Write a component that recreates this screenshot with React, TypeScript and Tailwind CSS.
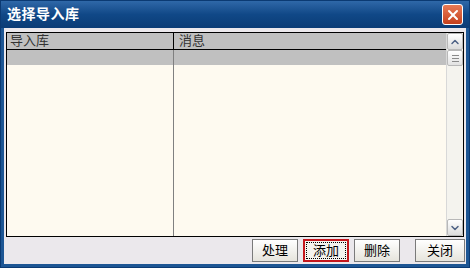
import { ChevronUp, ChevronDown, X } from 'lucide-react';

const font = { fontFamily: '"Liberation Sans", "Noto Sans CJK SC", sans-serif' };

function Btn({ label, focused, wide }: { label: string; focused?: boolean; wide?: boolean }) {
  const w = wide ? 'w-[50px]' : 'w-[46px]';
  return (
    <button
      className={
        focused
          ? `${w} h-[23px] border-2 border-[#c4161c] bg-[#f4f3ee] p-[1px]`
          : `${w} h-[23px] border border-[#7a7a7a] bg-gradient-to-b from-white to-[#e6e4dc] text-[13px] text-black`
      }
    >
      {focused ? (
        <span className="flex h-full w-full items-center justify-center border border-dotted border-black text-[13px] text-black">
          {label}
        </span>
      ) : (
        label
      )}
    </button>
  );
}

export default function App() {
  return (
    <div style={font} className="w-[470px] h-[268px] flex flex-col bg-[#0b3a73] p-[1px]">
      {/* title bar */}
      <div className="h-[27px] flex items-center justify-between pl-[6px] pr-[6px] bg-gradient-to-b from-[#2f68a8] via-[#104887] to-[#0b3c76]">
        <span className="text-white text-[14px] font-bold tracking-[0.5px]">选择导入库</span>
        <div className="w-[21px] h-[21px] rounded-[3px] border border-white bg-gradient-to-b from-[#e87a55] to-[#c5401c] flex items-center justify-center">
          <X className="w-[16px] h-[16px] text-white" strokeWidth={3} />
        </div>
      </div>
      {/* body */}
      <div className="flex-1 flex flex-col border-[3px] border-t-0 border-[#1d5694] bg-[#ebe8ec]">
        <div className="mx-[2px] mt-[4px] h-[205px] flex border border-black">
          <div className="flex-1 flex flex-col bg-[#fefaf0]">
            <div className="h-[17px] flex bg-[#c0c0c0] border-b border-black text-[13px] text-[#333]">
              <div className="w-[167px] border-r border-black pl-[3px] leading-[16px]">导入库</div>
              <div className="flex-1 pl-[5px] leading-[16px]">消息</div>
            </div>
            <div className="h-[15px] flex bg-[#c0c0c0]">
              <div className="w-[167px] border-r border-[#808080]" />
            </div>
            <div className="flex-1 flex">
              <div className="w-[167px] border-r border-[#808080]" />
            </div>
          </div>
          {/* scrollbar */}
          <div className="w-[17px] flex flex-col bg-[#f4f3ee] border-l border-[#d8d8d8]">
            <div className="h-[17px] flex items-center justify-center border border-[#b8b8b8] bg-gradient-to-b from-white to-[#dcdcdc] rounded-[2px]">
              <ChevronUp className="w-[12px] h-[12px] text-[#4d6185]" strokeWidth={3} />
            </div>
            <div className="h-[16px] flex flex-col items-center justify-center gap-[2px] border border-[#b8b8b8] bg-gradient-to-b from-white to-[#e2e2e2] rounded-[2px]">
              <div className="w-[7px] h-[1px] bg-[#8a8a8a]" />
              <div className="w-[7px] h-[1px] bg-[#8a8a8a]" />
              <div className="w-[7px] h-[1px] bg-[#8a8a8a]" />
            </div>
            <div className="flex-1" />
            <div className="h-[17px] flex items-center justify-center border border-[#b8b8b8] bg-gradient-to-b from-white to-[#dcdcdc] rounded-[2px]">
              <ChevronDown className="w-[12px] h-[12px] text-[#4d6185]" strokeWidth={3} />
            </div>
          </div>
        </div>
        <div className="flex-1 flex items-center justify-end pr-[1px] gap-[5px]">
          <Btn label="处理" />
          <Btn label="添加" focused />
          <Btn label="删除" />
          <div className="w-[5px]" />
          <Btn label="关闭" wide />
        </div>
      </div>
    </div>
  );
}
